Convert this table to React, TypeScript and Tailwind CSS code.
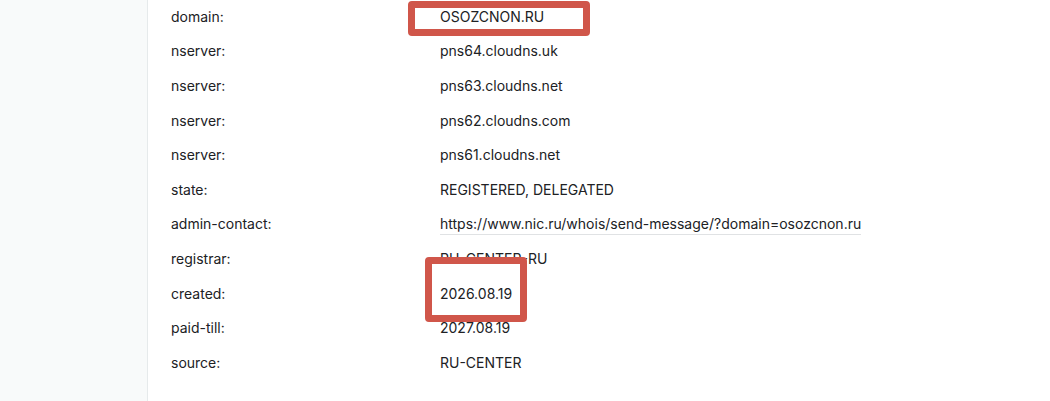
import React from "react";

const rows: [string, string, "box1" | "box2" | "link" | null][] = [
  ["domain:", "OSOZCNON.RU", "box1"],
  ["nserver:", "pns64.cloudns.uk", null],
  ["nserver:", "pns63.cloudns.net", null],
  ["nserver:", "pns62.cloudns.com", null],
  ["nserver:", "pns61.cloudns.net", null],
  ["state:", "REGISTERED, DELEGATED", null],
  ["admin-contact:", "https://www.nic.ru/whois/send-message/?domain=osozcnon.ru", "link"],
  ["registrar:", "RU-CENTER-RU", null],
  ["created:", "2026.08.19", "box2"],
  ["paid-till:", "2027.08.19", null],
  ["source:", "RU-CENTER", null],
];

export default function App() {
  return (
    <div
      className="flex w-[1050px] h-[401px] overflow-hidden bg-white text-[#202124] text-[14px]"
      style={{ fontFamily: "Inter, 'Noto Sans', sans-serif" }}
    >
      <div className="w-[148px] shrink-0 bg-[#f8fafa] border-r border-[#e6eaeb]" />
      <div className="flex-1 flex flex-col mt-[-1px]">
        {rows.map(([label, value, kind], i) => (
          <div key={i} className="flex items-center h-[34.6px] shrink-0">
            <div className="w-[292px] pl-[23px] shrink-0">{label}</div>
            <div className="relative">
              {kind === "link" ? (
                <span className="border-b border-[#e0e2e4] pb-[2px]">{value}</span>
              ) : (
                <span>{value}</span>
              )}
              {kind === "box1" && (
                <div className="absolute left-[-32px] top-[-5px] w-[182px] h-[35px] border-[7px] border-[#d0564a] rounded-[4px]" />
              )}
              {kind === "box2" && (
                <div className="absolute left-[-15px] top-[-26px] w-[102px] h-[65px] border-[7px] border-[#d0564a] rounded-[4px]" />
              )}
            </div>
          </div>
        ))}
      </div>
    </div>
  );
}
